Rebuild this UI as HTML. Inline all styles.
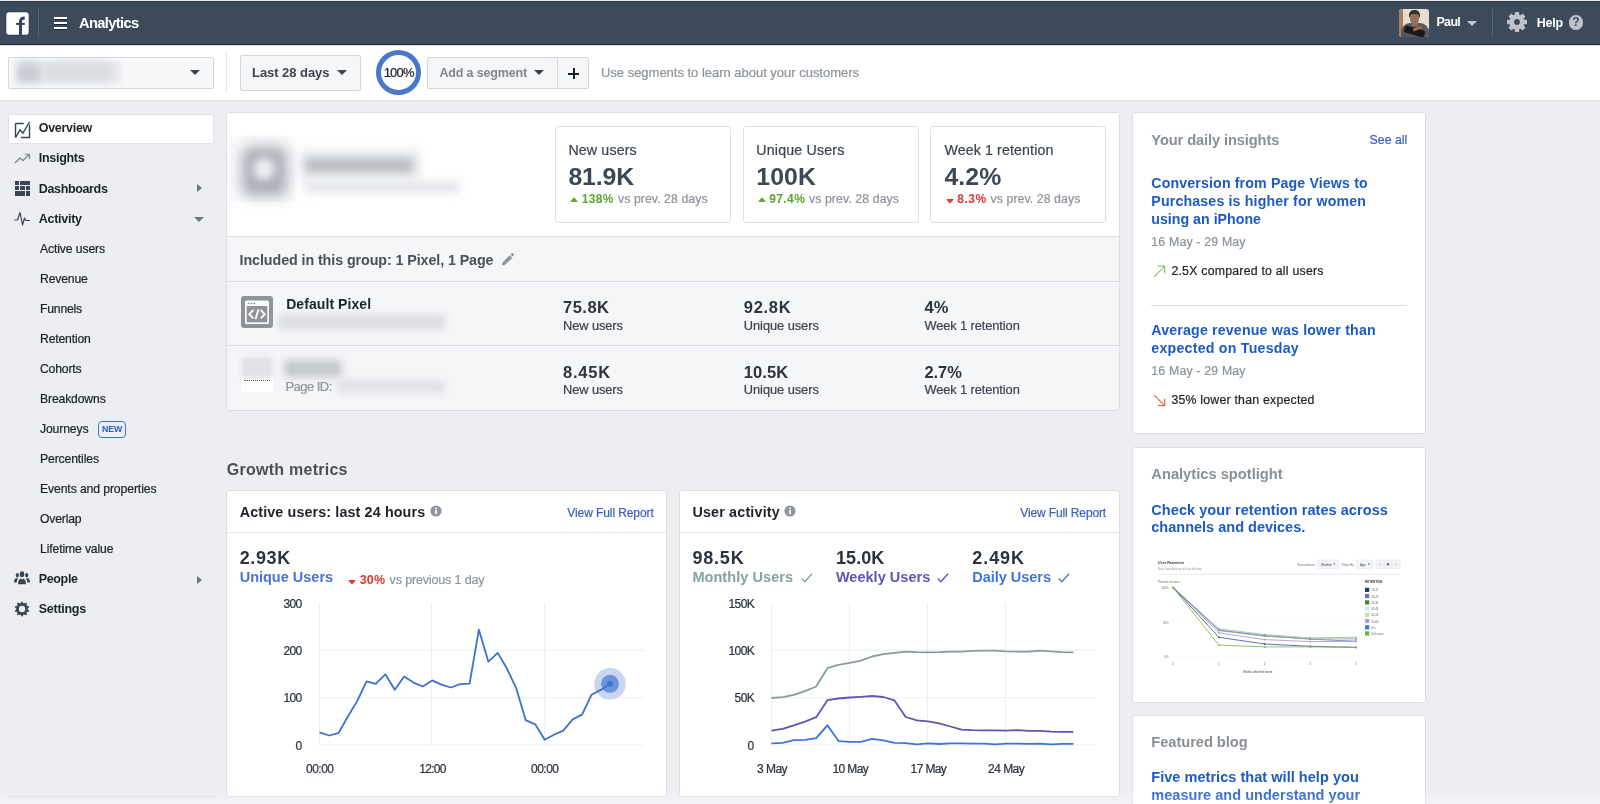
<!DOCTYPE html>
<html><head><meta charset="utf-8">
<style>
*{box-sizing:border-box;margin:0;padding:0}
html,body{width:1600px;height:804px;overflow:hidden;background:#edeef2;font-family:"Liberation Sans",sans-serif;color:#1d2129}
#wrap{position:absolute;left:0;top:0;width:1600px;height:804px;will-change:transform;overflow:hidden}
.abs{position:absolute}
.t{position:absolute;white-space:nowrap;line-height:1;-webkit-text-stroke:0.22px}
.card{position:absolute;background:#fff;border:1px solid #dddfe2;border-radius:3px}
.btn{position:absolute;background:#f5f6f7;border:1px solid #ccd0d5;border-radius:2px}
</style></head><body><div id="wrap">
<div class="abs" style="left:0;top:0;width:1600px;height:45px;background:#3d4a59;border-bottom:1px solid #1c2737">
<div class="abs" style="left:0;top:0;width:1600px;height:1px;background:#e6e7ea"></div>
<div class="abs" style="left:0;top:1px;width:1600px;height:1px;background:#323d4a"></div>
<svg class="abs" style="left:5px;top:11px" width="25" height="25" viewBox="-1 -1 25 25"><rect x="-0.400" y="-0.400" width="23.800" height="23.800" rx="3.400" fill="#1f3c5e"/><rect x="0.300" y="0.300" width="22.400" height="22.400" rx="2.800" fill="#fff"/><path d="M14.500 23.200V9.600c0-2.500 1.300-3.700 4.300-3.700" fill="none" stroke="#36465a" stroke-width="3"/><path d="M10.100 11.900H18.800" fill="none" stroke="#36465a" stroke-width="2.100"/></svg>
<div class="abs" style="left:38px;top:9px;width:1px;height:28px;background:#4e6580"></div>
<div class="abs" style="left:54px;top:17px;width:13px;height:2px;background:#fff;box-shadow:0 1px 0 #1a2340"></div>
<div class="abs" style="left:54px;top:22px;width:13px;height:2px;background:#fff;box-shadow:0 1px 0 #1a2340"></div>
<div class="abs" style="left:54px;top:27px;width:13px;height:2px;background:#fff;box-shadow:0 1px 0 #1a2340"></div>
<div class="t" style="left:79px;top:15.56px;font-size:14.7px;font-weight:bold;color:#fff;letter-spacing:-0.646px;-webkit-text-stroke:0;">Analytics</div>
<div class="abs" style="left:1399px;top:9px;width:30px;height:28px;border-radius:3px;overflow:hidden;background:#e6dfcf">
 <div class="abs" style="left:0;top:0;width:4px;height:28px;background:#a9805f"></div>
 <div class="abs" style="left:10px;top:1px;width:11px;height:8px;border-radius:5px 5px 2px 2px;background:#3a2d28"></div>
 <div class="abs" style="left:11px;top:5px;width:9px;height:10px;border-radius:3px 3px 5px 5px;background:#94705c"></div>
 <div class="abs" style="left:2px;top:14px;width:28px;height:16px;border-radius:9px 9px 0 0;background:#55565e"></div>
 <div class="abs" style="left:13px;top:13px;width:6px;height:4px;background:#94705c"></div>
 <div class="abs" style="left:5px;top:19px;width:21px;height:7px;background:#17171c;transform:rotate(16deg);border-radius:2px"></div>
 <div class="abs" style="left:14px;top:18px;width:9px;height:3px;background:#a5664a;transform:rotate(-20deg)"></div>
</div>
<div class="t" style="left:1436.4px;top:15.92px;font-size:12.5px;font-weight:bold;color:#fff;letter-spacing:-0.652px;-webkit-text-stroke:0;">Paul</div>
<div class="abs" style="left:1467px;top:20.5px;width:0;height:0;border-left:5.0px solid transparent;border-right:5.0px solid transparent;border-top:5px solid #c5cad1"></div>
<div class="abs" style="left:1492px;top:9px;width:1px;height:28px;background:#4e6580"></div>
<svg class="abs" style="left:1507.200px;top:12.400px" width="20" height="20" viewBox="0 0 20 20"><g fill="#bec3c9"><circle cx="10" cy="10" r="7.600"/><rect x="7.800" y="0" width="4.400" height="20" rx="0.800" transform="rotate(0 10 10)"/><rect x="7.800" y="0" width="4.400" height="20" rx="0.800" transform="rotate(45 10 10)"/><rect x="7.800" y="0" width="4.400" height="20" rx="0.800" transform="rotate(90 10 10)"/><rect x="7.800" y="0" width="4.400" height="20" rx="0.800" transform="rotate(135 10 10)"/></g><circle cx="10" cy="10" r="2.900" fill="#3d4a59"/></svg>
<div class="t" style="left:1536.8px;top:16.92px;font-size:12.5px;font-weight:bold;color:#fff;letter-spacing:-0.223px;-webkit-text-stroke:0;">Help</div>
<div class="abs" style="left:1568.700px;top:15.200px;width:14.600px;height:14.600px;border-radius:8px;background:#bec3c9;color:#3d4a59;font-weight:bold;font-size:12px;line-height:14.600px;text-align:center">?</div>
</div>
<div class="abs" style="left:0;top:45px;width:1600px;height:56px;background:#fff;border-bottom:1px solid #dfe1e5"></div>
<div class="abs" style="left:0;top:45px;width:1600px;height:1px;background:#d9d9da"></div>
<div class="abs" style="left:0;top:101px;width:1600px;height:1px;background:#e6e7eb"></div>
<div class="btn" style="left:8px;top:57px;width:206px;height:32px;background:#f7f8f9;border-color:#d5d8dd"></div>
<div class="abs" style="left:16px;top:61px;width:105px;height:22px;background:#e9ebee;filter:blur(2px)"></div>
<div class="abs" style="left:17px;top:62px;width:24px;height:21px;background:#c9cdd4;filter:blur(4px);border-radius:6px"></div>
<div class="abs" style="left:44px;top:63px;width:68px;height:18px;background:#d9dce1;filter:blur(4px);border-radius:6px"></div>
<div class="abs" style="left:190px;top:70px;width:0;height:0;border-left:5.0px solid transparent;border-right:5.0px solid transparent;border-top:5px solid #3a4453"></div>
<div class="abs" style="left:226px;top:51px;width:1px;height:42px;background:#e1e3e7"></div>
<div class="btn" style="left:240px;top:55px;width:121px;height:36px;border-color:#d5d8dd"></div>
<div class="t" style="left:252px;top:66.00px;font-size:13px;font-weight:bold;color:#3a4453;letter-spacing:-0.046px;-webkit-text-stroke:0;">Last 28 days</div>
<div class="abs" style="left:337px;top:70px;width:0;height:0;border-left:5.0px solid transparent;border-right:5.0px solid transparent;border-top:5px solid #3a4453"></div>
<div class="abs" style="left:376px;top:50px;width:45px;height:45px;border-radius:50%;border:5.500px solid #4a78c8"></div>
<div class="t" style="left:383.7px;top:66.00px;font-size:13px;color:#1d2129;letter-spacing:-0.812px;">100%</div>
<div class="btn" style="left:427px;top:57px;width:162px;height:32px;border-color:#d5d8dd"></div>
<div class="abs" style="left:557px;top:58px;width:1px;height:30px;background:#d5d8dd"></div>
<div class="t" style="left:439.5px;top:67.42px;font-size:12.5px;font-weight:bold;color:#7f8691;letter-spacing:-0.162px;-webkit-text-stroke:0;">Add a segment</div>
<div class="abs" style="left:534px;top:70px;width:0;height:0;border-left:5.0px solid transparent;border-right:5.0px solid transparent;border-top:5px solid #3a4453"></div>
<div class="abs" style="left:568.300px;top:73px;width:11px;height:1.500px;background:#1d2129"></div>
<div class="abs" style="left:573px;top:68.300px;width:1.500px;height:11px;background:#1d2129"></div>
<div class="t" style="left:601px;top:66.00px;font-size:13px;color:#8d949e;letter-spacing:-0.016px;">Use segments to learn about your customers</div>
<div class="abs" style="left:8px;top:114px;width:206px;height:30px;background:#fff;border:1px solid #dfe1e5;border-radius:2px"></div>
<div class="t" style="left:38.8px;top:121.82px;font-size:12.5px;font-weight:bold;color:#1d2129;letter-spacing:-0.299px;-webkit-text-stroke:0;">Overview</div>
<div class="t" style="left:38.8px;top:151.88px;font-size:12.5px;font-weight:bold;color:#1d2129;letter-spacing:-0.290px;-webkit-text-stroke:0;">Insights</div>
<div class="t" style="left:38.8px;top:182.94px;font-size:12.5px;font-weight:bold;color:#1d2129;letter-spacing:-0.355px;-webkit-text-stroke:0;">Dashboards</div>
<div class="t" style="left:38.8px;top:213.00px;font-size:12.5px;font-weight:bold;color:#1d2129;letter-spacing:-0.282px;-webkit-text-stroke:0;">Activity</div>
<div class="t" style="left:40px;top:243.31px;font-size:12.2px;color:#1d2129;letter-spacing:-0.116px;">Active users</div>
<div class="t" style="left:40px;top:273.37px;font-size:12.2px;color:#1d2129;letter-spacing:-0.157px;">Revenue</div>
<div class="t" style="left:40px;top:303.43px;font-size:12.2px;color:#1d2129;letter-spacing:-0.194px;">Funnels</div>
<div class="t" style="left:40px;top:333.49px;font-size:12.2px;color:#1d2129;letter-spacing:-0.164px;">Retention</div>
<div class="t" style="left:40px;top:362.55px;font-size:12.2px;color:#1d2129;letter-spacing:-0.184px;">Cohorts</div>
<div class="t" style="left:40px;top:392.61px;font-size:12.2px;color:#1d2129;letter-spacing:-0.148px;">Breakdowns</div>
<div class="t" style="left:40px;top:422.67px;font-size:12.2px;color:#1d2129;letter-spacing:-0.132px;">Journeys</div>
<div class="t" style="left:40px;top:452.73px;font-size:12.2px;color:#1d2129;letter-spacing:-0.127px;">Percentiles</div>
<div class="t" style="left:40px;top:482.79px;font-size:12.2px;color:#1d2129;letter-spacing:-0.103px;">Events and properties</div>
<div class="t" style="left:40px;top:512.85px;font-size:12.2px;color:#1d2129;letter-spacing:-0.184px;">Overlap</div>
<div class="t" style="left:40px;top:542.91px;font-size:12.2px;color:#1d2129;letter-spacing:-0.129px;">Lifetime value</div>
<div class="t" style="left:38.8px;top:572.72px;font-size:12.5px;font-weight:bold;color:#1d2129;letter-spacing:-0.367px;-webkit-text-stroke:0;">People</div>
<div class="t" style="left:38.8px;top:602.78px;font-size:12.5px;font-weight:bold;color:#1d2129;letter-spacing:-0.289px;-webkit-text-stroke:0;">Settings</div>
<div class="abs" style="left:98px;top:421px;width:28px;height:17px;border:1.300px solid #3a70d8;border-radius:4px"></div>
<div class="t" style="left:102px;top:425.35px;font-size:8.8px;font-weight:bold;color:#1f5fd2;letter-spacing:-0.077px;-webkit-text-stroke:0;">NEW</div>
<div class="abs" style="left:197px;top:184px;width:0;height:0;border-top:4.5px solid transparent;border-bottom:4.5px solid transparent;border-left:5px solid #70767f"></div>
<div class="abs" style="left:194px;top:216.5px;width:0;height:0;border-left:5.0px solid transparent;border-right:5.0px solid transparent;border-top:5px solid #70767f"></div>
<div class="abs" style="left:197px;top:575.5px;width:0;height:0;border-top:4.5px solid transparent;border-bottom:4.5px solid transparent;border-left:5px solid #70767f"></div>
<svg class="abs" style="left:14px;top:120.700px" width="17" height="18" viewBox="0 0 17 18"><path d="M1.500 2.500H9.800M1.500 2.500V16.500M7 16.500H15.500V3.800" fill="none" stroke="#3a4453" stroke-width="1.400"/><path d="M1.500 16.500L6 9l3 3 6.500-11" fill="none" stroke="#3a4453" stroke-width="1.400"/></svg>
<svg class="abs" style="left:14px;top:152.500px" width="17" height="12" viewBox="0 0 17 12"><path d="M1 10l5-5 3 2.500 6-5.500" fill="none" stroke="#8a9199" stroke-width="1.500"/><path d="M11 1.500h4.500V6" fill="none" stroke="#8a9199" stroke-width="1.500"/></svg>
<svg class="abs" style="left:15px;top:181px" width="15" height="15" viewBox="0 0 15 15"><rect x="0" y="0" width="4" height="4" fill="#3a4453"/><rect x="5" y="0" width="10" height="4" fill="#3a4453"/><rect x="0" y="5" width="4" height="4" fill="#3a4453"/><rect x="5" y="5" width="5" height="4" fill="#3a4453"/><rect x="11" y="5" width="4" height="4" fill="#3a4453"/><rect x="0" y="10" width="10" height="5" fill="#3a4453"/><rect x="11" y="10" width="4" height="5" fill="#3a4453"/></svg>
<svg class="abs" style="left:14px;top:210.500px" width="17" height="16" viewBox="0 0 17 16"><path d="M0.500 9h3L6 1.500 8.500 14l2-7 1.200 2.500H16" fill="none" stroke="#3a4453" stroke-width="1.200" stroke-linejoin="round"/></svg>
<svg class="abs" style="left:14.300px;top:571px" width="16" height="14" viewBox="0 0 16 14"><g fill="#3a4453"><ellipse cx="8" cy="3.300" rx="2.300" ry="3"/><path d="M4 13.300c0-3.800 1.300-5.200 2.600-5.900l1.400 1 1.400-1c1.300.7 2.600 2.100 2.600 5.900z"/><ellipse cx="3.300" cy="4.300" rx="1.500" ry="2.200"/><path d="M0 11.600c0-2.600.9-3.900 2.300-4.500.6.500 1.300.6 1.900.4-.9 1-1.400 2.300-1.500 4.100z"/><ellipse cx="12.700" cy="4.300" rx="1.500" ry="2.200"/><path d="M16 11.600c0-2.600-.9-3.900-2.300-4.500-.6.500-1.300.6-1.900.4.900 1 1.400 2.300 1.500 4.100z"/></g></svg>
<svg class="abs" style="left:14.200px;top:601.100px" width="16" height="16" viewBox="0 0 16 16"><polygon points="8.00,0.70 9.61,3.05 12.29,2.09 12.21,4.94 14.94,5.74 13.20,8.00 14.94,10.26 12.21,11.06 12.29,13.91 9.61,12.95 8.00,15.30 6.39,12.95 3.71,13.91 3.79,11.06 1.06,10.26 2.80,8.00 1.06,5.74 3.79,4.94 3.71,2.09 6.39,3.05" fill="#3a4453" stroke="#3a4453" stroke-width="0.800" stroke-linejoin="round"/><circle cx="8" cy="8" r="3.200" fill="#edeef2"/></svg>
<div class="abs" style="left:226px;top:112px;width:894px;height:299px;background:#f5f6f8;border:1px solid #dcdee3;border-radius:3px;overflow:hidden"><div class="abs" style="left:0;top:0;width:892px;height:123px;background:#fff"></div></div>
<div class="abs" style="left:227px;top:236px;width:892px;height:1px;background:#dcdee3"></div>
<div class="abs" style="left:227px;top:281px;width:892px;height:1px;background:#dcdee3"></div>
<div class="abs" style="left:227px;top:345px;width:892px;height:1px;background:#dcdee3"></div>
<div class="abs" style="left:229px;top:136px;width:66px;height:66px;background:#f9fafb"></div>
<div class="abs" style="left:242px;top:147px;width:45px;height:49px;background:#a6abb5;filter:blur(7px);border-radius:8px"></div>
<div class="abs" style="left:253px;top:158px;width:22px;height:22px;background:#eceef1;filter:blur(4px);border-radius:9px"></div>
<div class="abs" style="left:300px;top:150px;width:120px;height:30px;background:#e7e9ed;filter:blur(5px);border-radius:5px"></div>
<div class="abs" style="left:305px;top:159px;width:108px;height:13px;background:#b6bac2;filter:blur(4px);border-radius:5px"></div>
<div class="abs" style="left:304px;top:181px;width:156px;height:12px;background:#e3e5e9;filter:blur(4px);border-radius:5px"></div>
<div class="abs" style="left:555px;top:126px;width:176px;height:97px;background:#fff;border:1px solid #dfe1e6;border-radius:3px"></div>
<div class="t" style="left:568.4px;top:142.88px;font-size:14.2px;color:#3a4453;letter-spacing:0.163px;">New users</div>
<div class="t" style="left:568.4px;top:165.01px;font-size:24.8px;font-weight:bold;color:#3d4756;letter-spacing:-0.094px;-webkit-text-stroke:0;">81.9K</div>
<svg class="abs" style="left:570.2px;top:197.300px" width="8" height="6" viewBox="0 0 8 6"><path d="M4 1.200 6.800 4.300H1.200z" fill="#5fad2f" stroke="#5fad2f" stroke-width="1.200" stroke-linejoin="round"/></svg>
<div class="t" style="left:581.7px;top:193.24px;font-size:12px;font-weight:bold;color:#5aa62b;letter-spacing:0.374px;-webkit-text-stroke:0;">138%</div>
<div class="t" style="left:618px;top:192.99px;font-size:12.3px;color:#8d949e;letter-spacing:0.061px;">vs prev. 28 days</div>
<div class="abs" style="left:743px;top:126px;width:176px;height:97px;background:#fff;border:1px solid #dfe1e6;border-radius:3px"></div>
<div class="t" style="left:756.3px;top:142.88px;font-size:14.2px;color:#3a4453;letter-spacing:0.187px;">Unique Users</div>
<div class="t" style="left:756.3px;top:165.01px;font-size:24.8px;font-weight:bold;color:#3d4756;letter-spacing:0.105px;-webkit-text-stroke:0;">100K</div>
<svg class="abs" style="left:758.1px;top:197.300px" width="8" height="6" viewBox="0 0 8 6"><path d="M4 1.200 6.800 4.300H1.200z" fill="#5fad2f" stroke="#5fad2f" stroke-width="1.200" stroke-linejoin="round"/></svg>
<div class="t" style="left:769.2px;top:193.24px;font-size:12px;font-weight:bold;color:#5aa62b;letter-spacing:0.414px;-webkit-text-stroke:0;">97.4%</div>
<div class="t" style="left:808.9px;top:192.99px;font-size:12.3px;color:#8d949e;letter-spacing:0.098px;">vs prev. 28 days</div>
<div class="abs" style="left:930px;top:126px;width:176px;height:97px;background:#fff;border:1px solid #dfe1e6;border-radius:3px"></div>
<div class="t" style="left:944.4px;top:142.88px;font-size:14.2px;color:#3a4453;letter-spacing:0.131px;">Week 1 retention</div>
<div class="t" style="left:944.4px;top:165.01px;font-size:24.8px;font-weight:bold;color:#3d4756;letter-spacing:0.092px;-webkit-text-stroke:0;">4.2%</div>
<svg class="abs" style="left:945.5px;top:197.800px" width="8" height="6" viewBox="0 0 8 6"><path d="M4 4.600 6.800 1.500H1.200z" fill="#e0392b" stroke="#e0392b" stroke-width="1.200" stroke-linejoin="round"/></svg>
<div class="t" style="left:957.3px;top:193.24px;font-size:12px;font-weight:bold;color:#e0392b;letter-spacing:0.485px;-webkit-text-stroke:0;">8.3%</div>
<div class="t" style="left:990.6px;top:192.99px;font-size:12.3px;color:#8d949e;letter-spacing:0.073px;">vs prev. 28 days</div>
<div class="t" style="left:239.6px;top:252.80px;font-size:14.3px;font-weight:bold;color:#4b4f56;letter-spacing:-0.090px;-webkit-text-stroke:0;">Included in this group: 1 Pixel, 1 Page</div>
<svg class="abs" style="left:502px;top:252.500px" width="12" height="13" viewBox="0 0 12 13"><path d="M0 12.500 .7 9.300 7.800 2.200 10.300 4.700 3.200 11.800zM8.600 1.400 9.700.3c.4-.4 1-.4 1.400 0l.6.600c.4.400.4 1 0 1.400l-1.100 1.100z" fill="#8d949e"/></svg>
<svg class="abs" style="left:241px;top:296px" width="32" height="32" viewBox="0 0 32 32"><rect width="32" height="32" rx="3" fill="#8e959a"/><rect x="4" y="4.500" width="24" height="23.500" rx="1.500" fill="#fbfcfc"/><rect x="5.700" y="10" width="20.600" height="16.300" fill="#8e959a"/><circle cx="7.800" cy="7.300" r="0.900" fill="#8e959a"/><circle cx="10.600" cy="7.300" r="0.900" fill="#8e959a"/><circle cx="13.400" cy="7.300" r="0.900" fill="#8e959a"/><path d="M12.300 14 8.300 18.200 12.300 22.400M19.700 14 23.700 18.200 19.700 22.400M17.600 13.200 14.400 23.200" fill="none" stroke="#fbfcfc" stroke-width="1.900"/></svg>
<div class="t" style="left:286.2px;top:297.45px;font-size:14px;font-weight:bold;color:#1d2129;letter-spacing:0.067px;-webkit-text-stroke:0;">Default Pixel</div>
<div class="abs" style="left:278px;top:314px;width:167px;height:16px;background:#dcdee3;filter:blur(3.5px);border-radius:4px"></div>
<div class="abs" style="left:241px;top:355px;width:32px;height:37px;background:#fff"></div>
<div class="abs" style="left:241px;top:356px;width:32px;height:22px;background:#e1e3e7;filter:blur(2px)"></div>
<div class="abs" style="left:244px;top:380px;width:26px;height:1px;border-top:1.500px dotted #555"></div>
<div class="abs" style="left:284px;top:360px;width:58px;height:17px;background:#c3c6cc;filter:blur(4px);border-radius:4px"></div>
<div class="t" style="left:285.5px;top:380.00px;font-size:13px;color:#90949c;letter-spacing:-0.549px;">Page ID:</div>
<div class="abs" style="left:337px;top:380px;width:108px;height:13px;background:#dfe1e5;filter:blur(3.5px);border-radius:4px"></div>
<div class="t" style="left:563.1px;top:299.13px;font-size:16.5px;font-weight:bold;color:#2b3340;letter-spacing:0.454px;-webkit-text-stroke:0;">75.8K</div>
<div class="t" style="left:563.1px;top:319.86px;font-size:12.8px;color:#3a4453;letter-spacing:-0.084px;">New users</div>
<div class="t" style="left:743.8px;top:299.13px;font-size:16.5px;font-weight:bold;color:#2b3340;letter-spacing:0.694px;-webkit-text-stroke:0;">92.8K</div>
<div class="t" style="left:743.8px;top:319.86px;font-size:12.8px;color:#3a4453;letter-spacing:-0.034px;">Unique users</div>
<div class="t" style="left:924.4px;top:299.13px;font-size:16.5px;font-weight:bold;color:#2b3340;letter-spacing:0.070px;-webkit-text-stroke:0;">4%</div>
<div class="t" style="left:924.4px;top:319.86px;font-size:12.8px;color:#3a4453;letter-spacing:-0.076px;">Week 1 retention</div>
<div class="t" style="left:563.1px;top:363.83px;font-size:16.5px;font-weight:bold;color:#2b3340;letter-spacing:0.754px;-webkit-text-stroke:0;">8.45K</div>
<div class="t" style="left:563.1px;top:383.56px;font-size:12.8px;color:#3a4453;letter-spacing:-0.084px;">New users</div>
<div class="t" style="left:743.8px;top:363.83px;font-size:16.5px;font-weight:bold;color:#2b3340;letter-spacing:0.054px;-webkit-text-stroke:0;">10.5K</div>
<div class="t" style="left:743.8px;top:383.56px;font-size:12.8px;color:#3a4453;letter-spacing:-0.034px;">Unique users</div>
<div class="t" style="left:924.4px;top:363.83px;font-size:16.5px;font-weight:bold;color:#2b3340;letter-spacing:-0.027px;-webkit-text-stroke:0;">2.7%</div>
<div class="t" style="left:924.4px;top:383.56px;font-size:12.8px;color:#3a4453;letter-spacing:-0.076px;">Week 1 retention</div>
<div class="t" style="left:226.8px;top:461.96px;font-size:16px;font-weight:bold;color:#4b4f56;letter-spacing:0.253px;-webkit-text-stroke:0;">Growth metrics</div>
<div class="abs" style="left:226px;top:490px;width:441px;height:307px;background:#fff;border:1px solid #dcdee3;border-radius:3px"></div>
<div class="abs" style="left:227px;top:532px;width:439px;height:1px;background:#e1e3e7"></div>
<div class="abs" style="left:679px;top:490px;width:441px;height:307px;background:#fff;border:1px solid #dcdee3;border-radius:3px"></div>
<div class="abs" style="left:680px;top:532px;width:439px;height:1px;background:#e1e3e7"></div>
<div class="t" style="left:239.7px;top:504.80px;font-size:14.3px;font-weight:bold;color:#1d2129;letter-spacing:0.134px;-webkit-text-stroke:0;">Active users: last 24 hours</div>
<svg class="abs" style="left:429.7px;top:505.2px" width="12" height="12" viewBox="0 0 12 12"><circle cx="6" cy="6" r="5.600" fill="#8d949e"/><rect x="5.200" y="5" width="1.700" height="4.200" fill="#fff"/><rect x="5.200" y="2.600" width="1.700" height="1.600" fill="#fff"/></svg>
<div class="t" style="left:567.3px;top:506.74px;font-size:12px;color:#3b5fc0;letter-spacing:-0.089px;">View Full Report</div>
<div class="t" style="left:692.4px;top:504.80px;font-size:14.3px;font-weight:bold;color:#1d2129;letter-spacing:0.189px;-webkit-text-stroke:0;">User activity</div>
<svg class="abs" style="left:784.3px;top:505.2px" width="12" height="12" viewBox="0 0 12 12"><circle cx="6" cy="6" r="5.600" fill="#8d949e"/><rect x="5.200" y="5" width="1.700" height="4.200" fill="#fff"/><rect x="5.200" y="2.600" width="1.700" height="1.600" fill="#fff"/></svg>
<div class="t" style="left:1020.3px;top:506.74px;font-size:12px;color:#3b5fc0;letter-spacing:-0.127px;">View Full Report</div>
<div class="t" style="left:239.7px;top:548.86px;font-size:18px;font-weight:bold;color:#2b3340;letter-spacing:0.631px;-webkit-text-stroke:0;">2.93K</div>
<div class="t" style="left:239.7px;top:570.13px;font-size:14.5px;font-weight:bold;color:#4a73d1;letter-spacing:-0.007px;-webkit-text-stroke:0;">Unique Users</div>
<svg class="abs" style="left:348px;top:578.500px" width="8" height="6" viewBox="0 0 8 6"><path d="M4 4.600 6.800 1.500H1.200z" fill="#e0392b" stroke="#e0392b" stroke-width="1.200" stroke-linejoin="round"/></svg>
<div class="t" style="left:359.8px;top:573.82px;font-size:12.5px;font-weight:bold;color:#e0392b;letter-spacing:0.090px;-webkit-text-stroke:0;">30%</div>
<div class="t" style="left:389.6px;top:573.82px;font-size:12.5px;color:#8d949e;letter-spacing:-0.146px;">vs previous 1 day</div>
<svg class="abs" style="left:0;top:0" width="1600" height="804" viewBox="0 0 1600 804"><line x1="319.500" y1="650.2" x2="643.700" y2="650.2" stroke="#eceef1" stroke-width="1"/><line x1="319.500" y1="697.7" x2="643.700" y2="697.7" stroke="#eceef1" stroke-width="1"/><line x1="319.500" y1="745" x2="643.700" y2="745" stroke="#eceef1" stroke-width="1"/><line x1="319.5" y1="603" x2="319.5" y2="745" stroke="#eceef1" stroke-width="1"/><line x1="431.6" y1="603" x2="431.6" y2="745" stroke="#eceef1" stroke-width="1"/><line x1="544.7" y1="603" x2="544.7" y2="745" stroke="#eceef1" stroke-width="1"/><circle cx="610" cy="683.800" r="15.800" fill="#c9d6ef"/><circle cx="610" cy="683.800" r="9" fill="#6f92dc"/><circle cx="610" cy="683.800" r="3" fill="#3f6fd0"/><polyline points="319.5,732.3 329.2,735.5 338.5,733.1 348.0,716.3 357.3,700.9 366.5,681.4 375.8,683.8 385.3,674.3 394.8,689.7 404.1,676.5 413.6,682.6 422.8,686.5 432.1,680.4 441.4,684.6 450.9,687.5 460.1,684.1 469.6,683.6 478.9,629.7 488.4,661.7 497.7,652.9 506.9,668.5 516.4,688.7 525.7,720.2 535.2,724.3 544.7,739.7 554.0,734.8 563.2,730.6 572.7,719.4 582.0,714.6 591.5,694.8 600.8,689.9 610.0,683.8" fill="none" stroke="#3f6fd0" stroke-width="1.800" stroke-linejoin="round"/><line x1="771.400" y1="650.2" x2="1095.900" y2="650.2" stroke="#eceef1" stroke-width="1"/><line x1="771.400" y1="697.7" x2="1095.900" y2="697.7" stroke="#eceef1" stroke-width="1"/><line x1="771.400" y1="745" x2="1095.900" y2="745" stroke="#eceef1" stroke-width="1"/><line x1="771.4" y1="603" x2="771.4" y2="745" stroke="#eceef1" stroke-width="1"/><line x1="849.4" y1="603" x2="849.4" y2="745" stroke="#eceef1" stroke-width="1"/><line x1="927.4" y1="603" x2="927.4" y2="745" stroke="#eceef1" stroke-width="1"/><line x1="1005.4" y1="603" x2="1005.4" y2="745" stroke="#eceef1" stroke-width="1"/><polyline points="771.4,698.0 782.6,697.2 793.8,694.8 805.0,691.2 816.2,686.5 827.4,668.2 838.5,664.8 849.7,662.9 860.9,660.7 872.1,656.5 883.3,654.1 894.5,652.9 905.7,651.7 916.8,652.2 928.0,652.4 939.2,652.2 950.4,651.7 961.6,651.7 972.8,650.9 984.0,650.7 995.1,650.7 1006.3,651.4 1017.5,651.7 1028.7,651.7 1039.9,650.7 1051.1,651.4 1062.3,652.2 1073.4,652.4" fill="none" stroke="#839d9f" stroke-width="1.800" stroke-linejoin="round"/><polyline points="771.4,730.6 782.6,728.9 793.8,725.3 805.0,721.6 816.2,717.2 827.4,700.2 838.5,698.5 849.7,697.5 860.9,696.8 872.1,696.0 883.3,697.0 894.5,700.4 905.7,717.0 916.8,720.4 928.0,721.4 939.2,723.3 950.4,726.5 961.6,729.7 972.8,730.2 984.0,730.4 995.1,730.4 1006.3,730.6 1017.5,730.2 1028.7,730.9 1039.9,730.9 1051.1,731.6 1062.3,731.9 1073.4,731.9" fill="none" stroke="#5f55b5" stroke-width="1.800" stroke-linejoin="round"/><polyline points="771.4,743.3 782.6,742.8 793.8,740.1 805.0,739.9 816.2,738.2 827.4,725.3 838.5,741.1 849.7,741.9 860.9,741.9 872.1,738.9 883.3,740.4 894.5,742.8 905.7,743.1 916.8,744.3 928.0,743.3 939.2,744.0 950.4,743.3 961.6,743.3 972.8,743.6 984.0,743.6 995.1,744.3 1006.3,743.6 1017.5,743.6 1028.7,743.8 1039.9,743.6 1051.1,744.3 1062.3,743.8 1073.4,743.8" fill="none" stroke="#3d75dc" stroke-width="1.800" stroke-linejoin="round"/></svg>
<div class="t" style="left:283.4px;top:598.44px;font-size:12px;color:#2b3340;letter-spacing:-0.577px;">300</div>
<div class="t" style="left:283.4px;top:644.74px;font-size:12px;color:#2b3340;letter-spacing:-0.577px;">200</div>
<div class="t" style="left:283.4px;top:692.04px;font-size:12px;color:#2b3340;letter-spacing:-0.577px;">100</div>
<div class="t" style="left:295.6px;top:739.64px;font-size:12px;color:#2b3340;letter-spacing:-0.588px;">0</div>
<div class="t" style="left:306.1px;top:762.74px;font-size:12px;color:#2b3340;letter-spacing:-0.546px;">00:00</div>
<div class="t" style="left:419.3px;top:762.74px;font-size:12px;color:#2b3340;letter-spacing:-0.746px;">12:00</div>
<div class="t" style="left:531px;top:762.74px;font-size:12px;color:#2b3340;letter-spacing:-0.506px;">00:00</div>
<div class="t" style="left:692.4px;top:548.86px;font-size:18px;font-weight:bold;color:#2b3340;letter-spacing:0.811px;-webkit-text-stroke:0;">98.5K</div>
<div class="t" style="left:692.4px;top:570.13px;font-size:14.5px;font-weight:bold;color:#86a0a1;letter-spacing:0.060px;-webkit-text-stroke:0;">Monthly Users</div>
<svg class="abs" style="left:800.7px;top:573px" width="12" height="10" viewBox="0 0 12 10"><path d="M.8 5.500 3.800 8.800 11 .8" fill="none" stroke="#86a0a1" stroke-width="1.300"/></svg>
<div class="t" style="left:835.9px;top:548.86px;font-size:18px;font-weight:bold;color:#2b3340;letter-spacing:0.111px;-webkit-text-stroke:0;">15.0K</div>
<div class="t" style="left:835.9px;top:570.13px;font-size:14.5px;font-weight:bold;color:#5b55b8;letter-spacing:0.029px;-webkit-text-stroke:0;">Weekly Users</div>
<svg class="abs" style="left:937.1px;top:573px" width="12" height="10" viewBox="0 0 12 10"><path d="M.8 5.500 3.800 8.800 11 .8" fill="none" stroke="#5b55b8" stroke-width="1.300"/></svg>
<div class="t" style="left:972.2px;top:548.86px;font-size:18px;font-weight:bold;color:#2b3340;letter-spacing:0.971px;-webkit-text-stroke:0;">2.49K</div>
<div class="t" style="left:972.2px;top:570.13px;font-size:14.5px;font-weight:bold;color:#3d75dc;letter-spacing:-0.018px;-webkit-text-stroke:0;">Daily Users</div>
<svg class="abs" style="left:1057.5px;top:573px" width="12" height="10" viewBox="0 0 12 10"><path d="M.8 5.500 3.800 8.800 11 .8" fill="none" stroke="#3d75dc" stroke-width="1.300"/></svg>
<div class="t" style="left:728.5px;top:598.44px;font-size:12px;color:#2b3340;letter-spacing:-0.608px;">150K</div>
<div class="t" style="left:728.5px;top:644.74px;font-size:12px;color:#2b3340;letter-spacing:-0.608px;">100K</div>
<div class="t" style="left:734.6px;top:692.04px;font-size:12px;color:#2b3340;letter-spacing:-0.620px;">50K</div>
<div class="t" style="left:747.5px;top:739.64px;font-size:12px;color:#2b3340;letter-spacing:-0.087px;">0</div>
<div class="t" style="left:757px;top:762.74px;font-size:12px;color:#2b3340;letter-spacing:-0.537px;">3 May</div>
<div class="t" style="left:832.6px;top:762.74px;font-size:12px;color:#2b3340;letter-spacing:-0.660px;">10 May</div>
<div class="t" style="left:910.6px;top:762.74px;font-size:12px;color:#2b3340;letter-spacing:-0.627px;">17 May</div>
<div class="t" style="left:988.1px;top:762.74px;font-size:12px;color:#2b3340;letter-spacing:-0.543px;">24 May</div>
<div class="abs" style="left:8px;top:796px;width:206px;height:1px;background:#dcdee3"></div>
<div class="abs" style="left:1132px;top:112px;width:294px;height:322px;background:#fff;border:1px solid #dcdee3;border-radius:3px"></div>
<div class="abs" style="left:1132px;top:447px;width:294px;height:256px;background:#fff;border:1px solid #dcdee3;border-radius:3px"></div>
<div class="abs" style="left:1132px;top:715px;width:294px;height:120px;background:#fff;border:1px solid #dcdee3;border-radius:3px"></div>
<div class="t" style="left:1151.3px;top:133.26px;font-size:14.7px;font-weight:bold;color:#8a8f97;letter-spacing:-0.122px;-webkit-text-stroke:0;">Your daily insights</div>
<div class="t" style="left:1369.6px;top:133.79px;font-size:12.3px;color:#3b5fc0;letter-spacing:-0.001px;">See all</div>
<div class="t" style="left:1151.3px;top:176.38px;font-size:14.2px;font-weight:bold;color:#1c5ac8;letter-spacing:0.134px;-webkit-text-stroke:0;">Conversion from Page Views to</div>
<div class="t" style="left:1151.3px;top:194.28px;font-size:14.2px;font-weight:bold;color:#1c5ac8;letter-spacing:0.151px;-webkit-text-stroke:0;">Purchases is higher for women</div>
<div class="t" style="left:1151.3px;top:211.88px;font-size:14.2px;font-weight:bold;color:#1c5ac8;letter-spacing:0.008px;-webkit-text-stroke:0;">using an iPhone</div>
<div class="t" style="left:1151.3px;top:236.49px;font-size:12.3px;color:#8d949e;letter-spacing:0.187px;">16 May - 29 May</div>
<svg class="abs" style="left:1152.500px;top:265px" width="13" height="13" viewBox="0 0 13 13"><path d="M1 11.800 11.500 1.300M4.800 1.200H11.700V8.200" fill="none" stroke="#8cc56c" stroke-width="1.200"/></svg>
<div class="t" style="left:1171.4px;top:264.59px;font-size:12.3px;color:#1d2129;letter-spacing:0.231px;">2.5X compared to all users</div>
<div class="abs" style="left:1151px;top:305px;width:256px;height:1px;background:#dddfe2"></div>
<div class="t" style="left:1151.3px;top:322.78px;font-size:14.2px;font-weight:bold;color:#1c5ac8;letter-spacing:0.167px;-webkit-text-stroke:0;">Average revenue was lower than</div>
<div class="t" style="left:1151.3px;top:340.68px;font-size:14.2px;font-weight:bold;color:#1c5ac8;letter-spacing:0.235px;-webkit-text-stroke:0;">expected on Tuesday</div>
<div class="t" style="left:1151.3px;top:364.69px;font-size:12.3px;color:#8d949e;letter-spacing:0.187px;">16 May - 29 May</div>
<svg class="abs" style="left:1152.500px;top:394px" width="13" height="13" viewBox="0 0 13 13"><path d="M1.200 1.200 11.500 11.500M11.700 4.800V11.700H4.800" fill="none" stroke="#dd6a50" stroke-width="1.200"/></svg>
<div class="t" style="left:1171.4px;top:393.79px;font-size:12.3px;color:#1d2129;letter-spacing:0.226px;">35% lower than expected</div>
<div class="t" style="left:1151.3px;top:466.76px;font-size:14.7px;font-weight:bold;color:#8a8f97;letter-spacing:0.000px;-webkit-text-stroke:0;">Analytics spotlight</div>
<div class="t" style="left:1151.3px;top:503.33px;font-size:14.5px;font-weight:bold;color:#1c5ac8;letter-spacing:0.063px;-webkit-text-stroke:0;">Check your retention rates across</div>
<div class="t" style="left:1151.3px;top:519.93px;font-size:14.5px;font-weight:bold;color:#1c5ac8;letter-spacing:0.003px;-webkit-text-stroke:0;">channels and devices.</div>
<svg class="abs" style="left:0;top:0" width="1600" height="804" viewBox="0 0 1600 804"><line x1="1158" y1="574.300" x2="1400" y2="574.300" stroke="#e4e6ea" stroke-width="0.800"/><rect x="1317.2" y="560" width="21.5" height="8.600" rx="0.800" fill="#f3f4f6" stroke="#dfe1e5" stroke-width="0.500"/><rect x="1356.6" y="560" width="16.3" height="8.600" rx="0.800" fill="#f3f4f6" stroke="#dfe1e5" stroke-width="0.500"/><rect x="1375.8" y="560" width="24.4" height="8.600" rx="0.800" fill="#f3f4f6" stroke="#dfe1e5" stroke-width="0.500"/><line x1="1384" y1="560" x2="1384" y2="568.600" stroke="#dfe1e5" stroke-width="0.500"/><line x1="1392" y1="560" x2="1392" y2="568.600" stroke="#dfe1e5" stroke-width="0.500"/><circle cx="1388" cy="564.300" r="1.200" fill="#6a707a"/><path d="M1379 565.500l1.500-2.300M1395.300 565.300l1.500-1.800" stroke="#8a8f97" stroke-width="0.600"/><path d="M1333.200 563.600h2l-1 1.400zM1367.800 563.600h2l-1 1.400z" fill="#3a4453"/><line x1="1173" y1="622.1" x2="1356" y2="622.1" stroke="#eeeff2" stroke-width="0.600" stroke-dasharray="1.200 1"/><line x1="1173" y1="656.8" x2="1356" y2="656.8" stroke="#eeeff2" stroke-width="0.600" stroke-dasharray="1.200 1"/><polyline points="1173.0,587.4 1218.9,628.8 1264.6,634.6 1310.2,637.8 1356.1,637.3" fill="none" stroke="#b7a2dd" stroke-width="0.800"/><circle cx="1218.9" cy="628.8" r="0.900" fill="#b7a2dd"/><circle cx="1264.6" cy="634.6" r="0.900" fill="#b7a2dd"/><circle cx="1310.2" cy="637.8" r="0.900" fill="#b7a2dd"/><circle cx="1356.1" cy="637.3" r="0.900" fill="#b7a2dd"/><polyline points="1173.0,587.4 1218.9,630.1 1264.6,635.7 1310.2,639.1 1356.1,641.3" fill="none" stroke="#3f7bd9" stroke-width="0.800"/><circle cx="1218.9" cy="630.1" r="0.900" fill="#3f7bd9"/><circle cx="1264.6" cy="635.7" r="0.900" fill="#3f7bd9"/><circle cx="1310.2" cy="639.1" r="0.900" fill="#3f7bd9"/><circle cx="1356.1" cy="641.3" r="0.900" fill="#3f7bd9"/><polyline points="1173.0,587.4 1218.9,630.6 1264.6,636.2 1310.2,638.9 1356.1,638.9" fill="none" stroke="#7ab648" stroke-width="0.800"/><circle cx="1218.9" cy="630.6" r="0.900" fill="#7ab648"/><circle cx="1264.6" cy="636.2" r="0.900" fill="#7ab648"/><circle cx="1310.2" cy="638.9" r="0.900" fill="#7ab648"/><circle cx="1356.1" cy="638.9" r="0.900" fill="#7ab648"/><polyline points="1173.0,587.4 1218.9,632.8 1264.6,639.6 1310.2,641.6 1356.1,641.3" fill="none" stroke="#a98ad6" stroke-width="0.800"/><circle cx="1218.9" cy="632.8" r="0.900" fill="#a98ad6"/><circle cx="1264.6" cy="639.6" r="0.900" fill="#a98ad6"/><circle cx="1310.2" cy="641.6" r="0.900" fill="#a98ad6"/><circle cx="1356.1" cy="641.3" r="0.900" fill="#a98ad6"/><polyline points="1173.0,587.4 1218.9,637.3 1264.6,644.0 1310.2,646.3 1356.1,647.4" fill="none" stroke="#31508c" stroke-width="0.800"/><circle cx="1218.9" cy="637.3" r="0.900" fill="#31508c"/><circle cx="1264.6" cy="644.0" r="0.900" fill="#31508c"/><circle cx="1310.2" cy="646.3" r="0.900" fill="#31508c"/><circle cx="1356.1" cy="647.4" r="0.900" fill="#31508c"/><polyline points="1173.0,587.4 1218.9,645.1 1264.6,646.9 1310.2,646.9 1356.1,647.4" fill="none" stroke="#77b843" stroke-width="0.800"/><circle cx="1218.9" cy="645.1" r="0.900" fill="#77b843"/><circle cx="1264.6" cy="646.9" r="0.900" fill="#77b843"/><circle cx="1310.2" cy="646.9" r="0.900" fill="#77b843"/><circle cx="1356.1" cy="647.4" r="0.900" fill="#77b843"/><circle cx="1173" cy="587.400" r="1.100" fill="#77b843"/><rect x="1365" y="587.8" width="4.200" height="4.200" fill="#1f3a6e"/><rect x="1365" y="594.0" width="4.200" height="4.200" fill="#7c62c9"/><rect x="1365" y="600.3" width="4.200" height="4.200" fill="#3d8a2b"/><rect x="1365" y="606.5" width="4.200" height="4.200" fill="#d6e4f7"/><rect x="1365" y="612.7" width="4.200" height="4.200" fill="#c4e09a"/><rect x="1365" y="618.9" width="4.200" height="4.200" fill="#b39ad9"/><rect x="1365" y="625.2" width="4.200" height="4.200" fill="#3a78d8"/><rect x="1365" y="631.4" width="4.200" height="4.200" fill="#6db33f"/></svg>
<div class="t" style="left:1158px;top:562.15px;font-size:3.6px;font-weight:bold;color:#2b3340;letter-spacing:0.031px;-webkit-text-stroke:0;">User Retention</div>
<div class="t" style="left:1158px;top:568.06px;font-size:3px;color:#9aa0a8;letter-spacing:-0.012px;-webkit-text-stroke:0;">New User Activity to User Activity</div>
<div class="t" style="left:1296.8px;top:563.69px;font-size:3.2px;color:#6a707a;letter-spacing:-0.030px;-webkit-text-stroke:0;">Time interval:</div>
<div class="t" style="left:1321px;top:563.69px;font-size:3.2px;color:#3a4453;letter-spacing:0.016px;-webkit-text-stroke:0;">Weekly</div>
<div class="t" style="left:1341.6px;top:563.69px;font-size:3.2px;color:#6a707a;letter-spacing:-0.059px;-webkit-text-stroke:0;">Show By:</div>
<div class="t" style="left:1360px;top:563.69px;font-size:3.2px;color:#3a4453;letter-spacing:0.109px;-webkit-text-stroke:0;">Age</div>
<div class="t" style="left:1158px;top:581.18px;font-size:3.1px;color:#6a707a;letter-spacing:-0.052px;-webkit-text-stroke:0;">Percent of users</div>
<div class="t" style="left:1365px;top:581.18px;font-size:3.1px;font-weight:bold;color:#3a4453;letter-spacing:-0.066px;-webkit-text-stroke:0;">RETENTION</div>
<div class="t" style="left:1161.3px;top:586.96px;font-size:3px;color:#6a707a;letter-spacing:-0.122px;-webkit-text-stroke:0;">100%</div>
<div class="t" style="left:1163px;top:621.66px;font-size:3px;color:#6a707a;letter-spacing:-0.172px;-webkit-text-stroke:0;">50%</div>
<div class="t" style="left:1164.2px;top:656.36px;font-size:3px;color:#6a707a;letter-spacing:-0.022px;-webkit-text-stroke:0;">0%</div>
<div class="t" style="left:1172.2px;top:663.26px;font-size:3px;color:#6a707a;letter-spacing:0.028px;-webkit-text-stroke:0;">0</div>
<div class="t" style="left:1218.1000000000001px;top:663.26px;font-size:3px;color:#6a707a;letter-spacing:0.028px;-webkit-text-stroke:0;">1</div>
<div class="t" style="left:1263.8px;top:663.26px;font-size:3px;color:#6a707a;letter-spacing:0.028px;-webkit-text-stroke:0;">2</div>
<div class="t" style="left:1309.4px;top:663.26px;font-size:3px;color:#6a707a;letter-spacing:0.028px;-webkit-text-stroke:0;">3</div>
<div class="t" style="left:1355.3px;top:663.26px;font-size:3px;color:#6a707a;letter-spacing:0.028px;-webkit-text-stroke:0;">4</div>
<div class="t" style="left:1243px;top:670.78px;font-size:3.1px;color:#3a4453;letter-spacing:-0.067px;-webkit-text-stroke:0;">Weeks after first event</div>
<div class="t" style="left:1371.3px;top:589.46px;font-size:3px;color:#6a707a;letter-spacing:-0.138px;-webkit-text-stroke:0;">13-17</div>
<div class="t" style="left:1371.3px;top:595.69px;font-size:3px;color:#6a707a;letter-spacing:-0.138px;-webkit-text-stroke:0;">18-24</div>
<div class="t" style="left:1371.3px;top:601.92px;font-size:3px;color:#6a707a;letter-spacing:-0.138px;-webkit-text-stroke:0;">25-34</div>
<div class="t" style="left:1371.3px;top:608.15px;font-size:3px;color:#6a707a;letter-spacing:-0.138px;-webkit-text-stroke:0;">35-44</div>
<div class="t" style="left:1371.3px;top:614.38px;font-size:3px;color:#6a707a;letter-spacing:-0.138px;-webkit-text-stroke:0;">45-54</div>
<div class="t" style="left:1371.3px;top:620.61px;font-size:3px;color:#6a707a;letter-spacing:-0.138px;-webkit-text-stroke:0;">55-64</div>
<div class="t" style="left:1371.3px;top:626.84px;font-size:3px;color:#6a707a;letter-spacing:-0.198px;-webkit-text-stroke:0;">65+</div>
<div class="t" style="left:1371.3px;top:633.07px;font-size:3px;color:#6a707a;letter-spacing:-0.002px;-webkit-text-stroke:0;">Unknown</div>
<div class="t" style="left:1151.3px;top:735.46px;font-size:14.7px;font-weight:bold;color:#8a8f97;letter-spacing:-0.062px;-webkit-text-stroke:0;">Featured blog</div>
<div class="t" style="left:1151.3px;top:770.23px;font-size:14.5px;font-weight:bold;color:#1c5ac8;letter-spacing:0.039px;-webkit-text-stroke:0;">Five metrics that will help you</div>
<div class="t" style="left:1151.3px;top:788.03px;font-size:14.5px;font-weight:bold;color:#1c5ac8;letter-spacing:0.034px;-webkit-text-stroke:0;">measure and understand your</div>
<div class="abs" style="left:0;top:786px;width:1600px;height:18px;background:linear-gradient(to bottom,rgba(255,255,255,0),rgba(255,255,255,0.300))"></div>
</div></body></html>
